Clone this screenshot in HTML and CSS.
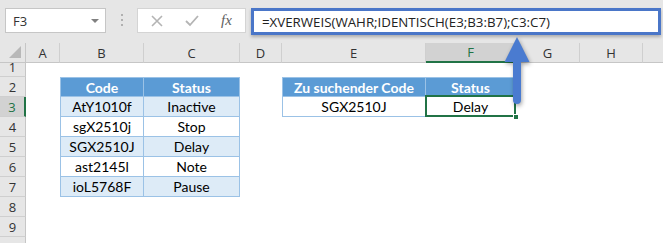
FILE: index.html
```html
<!DOCTYPE html>
<html lang="de">
<head>
    <meta charset="UTF-8">
    <title>XVERWEIS IDENTISCH</title>
    <link rel="stylesheet" href="styles.css">
</head>
<body>
    <div class="app">
        <div class="toolbar">
            <div class="namebox">
                <span class="namebox-text">F3</span>
                <span class="namebox-caret"></span>
            </div>
            <div class="grip"><i></i><i></i><i></i></div>
            <div class="fx-buttons">
                <svg class="fx-icon" width="12" height="12" viewBox="0 0 12 12">
                    <path d="M1 1 L11 11 M11 1 L1 11" stroke="#b4b4b4" stroke-width="1.6" fill="none"/>
                </svg>
                <svg class="fx-icon" width="14" height="12" viewBox="0 0 14 12">
                    <path d="M1 6 L5 10 L13 1" stroke="#b4b4b4" stroke-width="1.8" fill="none"/>
                </svg>
                <span class="fx-label">fx</span>
            </div>
            <div class="formula">=XVERWEIS(WAHR;IDENTISCH(E3;B3:B7);C3:C7)</div>
        </div>

        <div class="sheet">
            <div class="corner">
                <svg width="12" height="12" viewBox="0 0 12 12"><path d="M12 0 L12 12 L0 12 Z" fill="#b8b8b8"/></svg>
            </div>
            <div class="col-head">A</div>
            <div class="col-head">B</div>
            <div class="col-head">C</div>
            <div class="col-head">D</div>
            <div class="col-head">E</div>
            <div class="col-head active">F</div>
            <div class="col-head">G</div>
            <div class="col-head">H</div>
            <div class="col-head last"></div>

            <div class="row-heads">
                <div class="row-head short">1</div>
                <div class="row-head">2</div>
                <div class="row-head active">3</div>
                <div class="row-head">4</div>
                <div class="row-head">5</div>
                <div class="row-head">6</div>
                <div class="row-head">7</div>
                <div class="row-head">8</div>
                <div class="row-head">9</div>
                <div class="row-head"></div>
            </div>

            <div class="xl-table codes">
                <div class="cell head">Code</div>
                <div class="cell head">Status</div>
                <div class="cell band">AtY1010f</div>
                <div class="cell band">Inactive</div>
                <div class="cell">sgX2510j</div>
                <div class="cell">Stop</div>
                <div class="cell band">SGX2510J</div>
                <div class="cell band">Delay</div>
                <div class="cell">ast2145l</div>
                <div class="cell">Note</div>
                <div class="cell band">ioL5768F</div>
                <div class="cell band">Pause</div>
            </div>

            <div class="xl-table lookup">
                <div class="cell head">Zu suchender Code</div>
                <div class="cell head">Status</div>
                <div class="cell">SGX2510J</div>
                <div class="cell selected">Delay<span class="fill-handle"></span></div>
            </div>
        </div>

        <svg class="arrow" width="34" height="74" viewBox="0 0 34 74">
            <path d="M17 3 L29.5 28 L21 28 L21 66 Q21 70 17 70 Q13 70 13 66 L13 28 L4.5 28 Z" fill="#4a7bd0"/>
        </svg>
    </div>
</body>
</html>
```

FILE: styles.css
```css
* {
    box-sizing: border-box;
}

body {
    margin: 0;
    background: #ffffff;
    overflow: hidden;
}

.app {
    position: relative;
    width: 663px;
    height: 243px;
    overflow: hidden;
}

/* formula bar */
.toolbar {
    display: flex;
    align-items: flex-start;
    height: 43px;
    padding: 8px 0 0 5px;
    background-color: #e6e6e6;
    font-family: "Open Sans", sans-serif;
}

.namebox {
    display: flex;
    align-items: center;
    justify-content: space-between;
    width: 101px;
    height: 25px;
    padding: 0 6px 0 7px;
    background: #fff;
    border: 1px solid #c6c6c6;
}

.namebox-text {
    font-size: 13px;
    color: #333;
}

.namebox-caret {
    width: 0;
    height: 0;
    border-left: 4px solid transparent;
    border-right: 4px solid transparent;
    border-top: 4px solid #808080;
}

.grip {
    display: flex;
    flex-direction: column;
    align-items: center;
    gap: 3px;
    width: 31px;
    padding-top: 6px;
}

.grip i {
    width: 2px;
    height: 2px;
    background: #b0b0b0;
}

.fx-buttons {
    display: flex;
    align-items: center;
    gap: 22px;
    width: 109px;
    height: 25px;
    padding-left: 13px;
    background: #fff;
    border: 1px solid #d4d4d4;
}

.fx-label {
    font-family: "Liberation Serif", serif;
    font-style: italic;
    font-size: 15px;
    color: #606060;
}

.formula {
    display: flex;
    align-items: center;
    width: 410px;
    height: 27px;
    margin-left: 5px;
    padding-left: 8px;
    background: #fff;
    border: 3px solid #4a76c8;
    box-shadow: 0 2px 3px rgba(0, 0, 0, 0.25);
    font-size: 13.3px;
    color: #222;
    white-space: nowrap;
}

/* sheet grid */
.sheet {
    display: grid;
    grid-template-columns: 26px 34px 84px 96px 42px 144px 90px 64px 63px 1fr;
    grid-template-rows: 20px 14px repeat(9, 20px);
    font-family: "Open Sans", sans-serif;
}

.corner {
    display: flex;
    align-items: flex-end;
    justify-content: flex-end;
    padding: 0 4px 4px 0;
    background: #e6e6e6;
    border-right: 1px solid #c6c6c6;
    border-bottom: 1px solid #c6c6c6;
}

.col-head {
    display: flex;
    align-items: center;
    justify-content: center;
    background: #e6e6e6;
    border-right: 1px solid #cfcfcf;
    border-bottom: 1px solid #c6c6c6;
    font-size: 13px;
    color: #333;
}

.col-head.active {
    background: #d2d2d2;
    border-bottom: 2px solid #217346;
    color: #217346;
}

.col-head.last {
    border-right: none;
}

.row-heads {
    grid-column: 1;
    grid-row: 2 / -1;
    display: flex;
    flex-direction: column;
}

.row-head {
    display: flex;
    align-items: center;
    justify-content: center;
    height: 20px;
    flex-shrink: 0;
    background: #e6e6e6;
    border-right: 1px solid #c6c6c6;
    border-bottom: 1px solid #cfcfcf;
    font-size: 13px;
    color: #333;
}

.row-head.short {
    height: 14px;
    align-items: flex-end;
}

.row-head.active {
    background: #d2d2d2;
    border-right: 2px solid #217346;
    color: #217346;
}

/* tables on the sheet */
.xl-table {
    display: grid;
    border-left: 1px solid #9bc2e6;
    border-top: 1px solid #9bc2e6;
    font-family: Lato, sans-serif;
    font-size: 14px;
}

.xl-table.codes {
    grid-column: 3 / 5;
    grid-row: 3 / 9;
    grid-template-columns: 83px 96px;
    grid-template-rows: 19px repeat(5, 20px);
}

.xl-table.lookup {
    grid-column: 6 / 8;
    grid-row: 3 / 5;
    grid-template-columns: 143px 90px;
    grid-template-rows: 19px 20px;
}

.cell {
    position: relative;
    display: flex;
    align-items: center;
    justify-content: center;
    border-right: 1px solid #9bc2e6;
    border-bottom: 1px solid #9bc2e6;
    color: #000;
}

.cell.head {
    background: #5b9bd5;
    color: #fff;
    font-weight: bold;
}

.cell.band {
    background: #ddebf7;
}

.cell.selected::before {
    content: "";
    position: absolute;
    top: -2px;
    left: -1px;
    right: -1px;
    bottom: -1px;
    border: 2px solid #217346;
}

.fill-handle {
    position: absolute;
    right: -4px;
    bottom: -4px;
    width: 6px;
    height: 6px;
    background: #217346;
    border: 1px solid #fff;
}

/* callout arrow */
.arrow {
    position: absolute;
    left: 500px;
    top: 34px;
    filter: drop-shadow(1px 2px 2px rgba(0, 0, 0, 0.35));
}
```
